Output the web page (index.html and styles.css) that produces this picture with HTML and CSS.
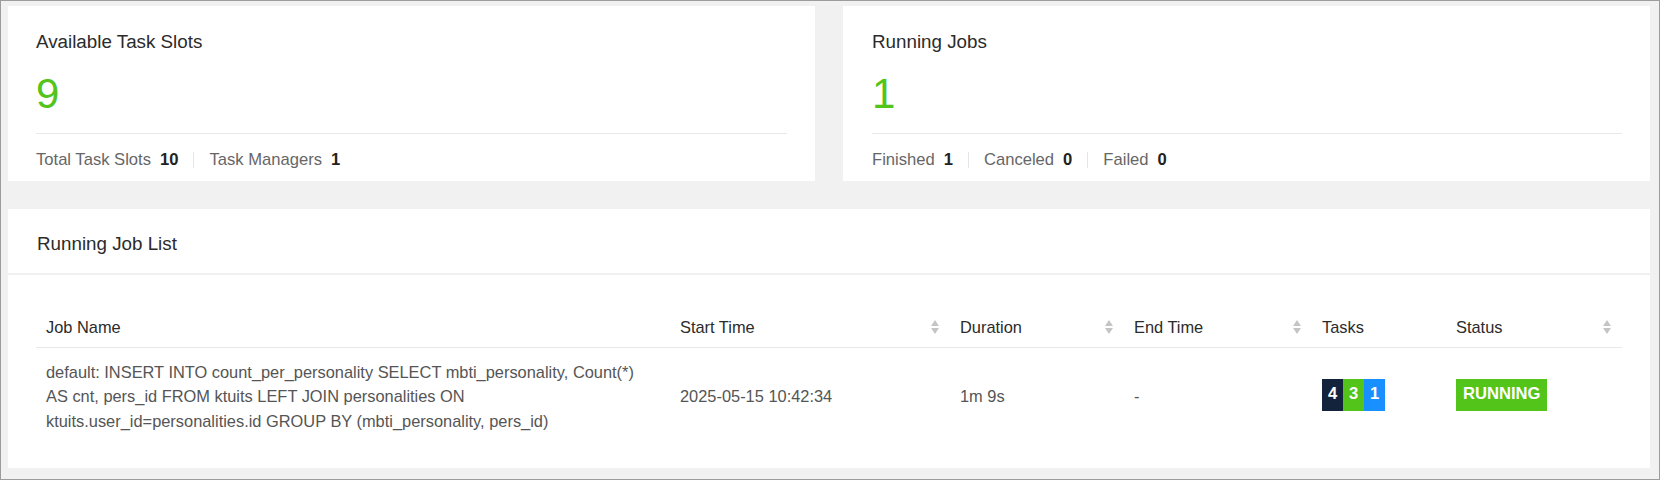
FILE: index.html
```html
<!DOCTYPE html>
<html>
<head>
<meta charset="utf-8">
<link rel="stylesheet" href="styles.css">
</head>
<body>
<div class="frame">
  <div class="stats">
    <div class="card stat-card">
      <div class="stat-title">Available Task Slots</div>
      <div class="stat-value">9</div>
      <div class="stat-footer">
        <span class="item"><span class="label">Total Task Slots</span><b>10</b></span>
        <span class="sep"></span>
        <span class="item"><span class="label">Task Managers</span><b>1</b></span>
      </div>
    </div>
    <div class="card stat-card right">
      <div class="stat-title">Running Jobs</div>
      <div class="stat-value">1</div>
      <div class="stat-footer">
        <span class="item"><span class="label">Finished</span><b>1</b></span>
        <span class="sep"></span>
        <span class="item"><span class="label">Canceled</span><b>0</b></span>
        <span class="sep"></span>
        <span class="item"><span class="label">Failed</span><b>0</b></span>
      </div>
    </div>
  </div>
  <div class="card list-card">
    <div class="list-head">Running Job List</div>
    <div class="list-body">
      <table class="jobs">
        <colgroup>
          <col class="c-name"><col class="c-start"><col class="c-dur"><col class="c-end"><col class="c-tasks"><col class="c-status">
        </colgroup>
        <thead>
          <tr>
            <th>Job Name</th>
            <th><div class="th-in"><span>Start Time</span><span class="sorter"><i class="up"></i><i class="down"></i></span></div></th>
            <th><div class="th-in"><span>Duration</span><span class="sorter"><i class="up"></i><i class="down"></i></span></div></th>
            <th><div class="th-in"><span>End Time</span><span class="sorter"><i class="up"></i><i class="down"></i></span></div></th>
            <th>Tasks</th>
            <th><div class="th-in"><span>Status</span><span class="sorter"><i class="up"></i><i class="down"></i></span></div></th>
          </tr>
        </thead>
        <tbody>
          <tr>
            <td class="name">default: INSERT INTO count_per_personality SELECT mbti_personality, Count(*) AS cnt, pers_id FROM ktuits LEFT JOIN personalities ON ktuits.user_id=personalities.id GROUP BY (mbti_personality, pers_id)</td>
            <td>2025-05-15 10:42:34</td>
            <td>1m 9s</td>
            <td>-</td>
            <td><div class="badge-wrap"><span class="tasks"><span class="t t-dark">4</span><span class="t t-green">3</span><span class="t t-blue">1</span></span></div></td>
            <td><div class="badge-wrap"><span class="status">RUNNING</span></div></td>
          </tr>
        </tbody>
      </table>
    </div>
  </div>
</div>
</body>
</html>
```
FILE: styles.css
```css
html, body {
  margin: 0;
  padding: 0;
}
body {
  font-family: "Liberation Sans", Arial, sans-serif;
  color: #333;
}
.frame {
  width: 1660px;
  height: 480px;
  box-sizing: border-box;
  border: 1px solid #9c9c9c;
  background: #f1f1f1;
  padding: 5px 9px 0 7px;
}
.stats {
  display: grid;
  grid-template-columns: 1fr 1fr;
  gap: 28px;
}
.card {
  background: #fff;
}
.stat-card {
  height: 175px;
  box-sizing: border-box;
  padding: 22px 28px 0 28px;
}
.stat-card.right {
  padding-left: 29px;
}
.stat-title {
  font-size: 18.8px;
  line-height: 27px;
  color: #2b2b2b;
}
.stat-value {
  font-size: 42px;
  line-height: 48px;
  color: #52c41a;
  margin-top: 15px;
  padding-bottom: 15px;
  border-bottom: 1px solid #e8e8e8;
}
.stat-footer {
  display: flex;
  align-items: center;
  margin-top: 14px;
  font-size: 16.6px;
  line-height: 24px;
}
.stat-footer .label {
  color: #666;
}
.stat-footer b {
  color: #222;
  margin-left: 9px;
}
.stat-footer .sep {
  width: 1px;
  height: 16px;
  background: #e6e6e6;
  margin: 0 15px;
}
.list-card {
  margin-top: 28px;
  height: 259px;
}
.list-head {
  height: 66px;
  box-sizing: border-box;
  padding: 5px 28px 0 29px;
  display: flex;
  align-items: center;
  font-size: 18.8px;
  color: #2b2b2b;
  border-bottom: 2px solid #f0f0f0;
}
.list-body {
  padding: 31px 28px 0 28px;
}
.jobs {
  width: 100%;
  border-collapse: collapse;
  table-layout: fixed;
  font-size: 16.4px;
}
.c-name { width: 634px; }
.c-start { width: 280px; }
.c-dur { width: 174px; }
.c-end { width: 188px; }
.c-tasks { width: 134px; }
.c-status { width: auto; }
.jobs th {
  font-weight: normal;
  text-align: left;
  color: #2b2b2b;
  height: 41px;
  padding: 0 10px;
  line-height: 22px;
  border-bottom: 1px solid #e8e8e8;
}
.th-in {
  display: flex;
  align-items: center;
  justify-content: space-between;
}
.sorter {
  display: flex;
  flex-direction: column;
  gap: 2px;
  margin-right: 1px;
}
.sorter i {
  display: block;
  width: 0;
  height: 0;
  border-left: 4.5px solid transparent;
  border-right: 4.5px solid transparent;
}
.sorter .up {
  border-bottom: 6px solid #c4c4c4;
}
.sorter .down {
  border-top: 6px solid #c4c4c4;
}
.jobs td {
  color: #555;
  padding: 12px 10px 13px;
  line-height: 24.4px;
  vertical-align: middle;
}
.jobs td.name {
  padding-right: 14px;
}
.badge-wrap {
  display: flex;
  margin-bottom: 4px;
}
.tasks {
  display: flex;
  height: 32px;
}
.t {
  width: 21px;
  display: flex;
  align-items: center;
  justify-content: center;
  color: #fff;
  font-weight: bold;
  font-size: 16.6px;
}
.t-dark { background: #13233b; }
.t-green { background: #52c41a; }
.t-blue { background: #1890ff; }
.status {
  display: flex;
  align-items: center;
  height: 32px;
  padding: 0 7px;
  background: #52c41a;
  color: #fff;
  font-weight: bold;
  font-size: 16.6px;
}
```
